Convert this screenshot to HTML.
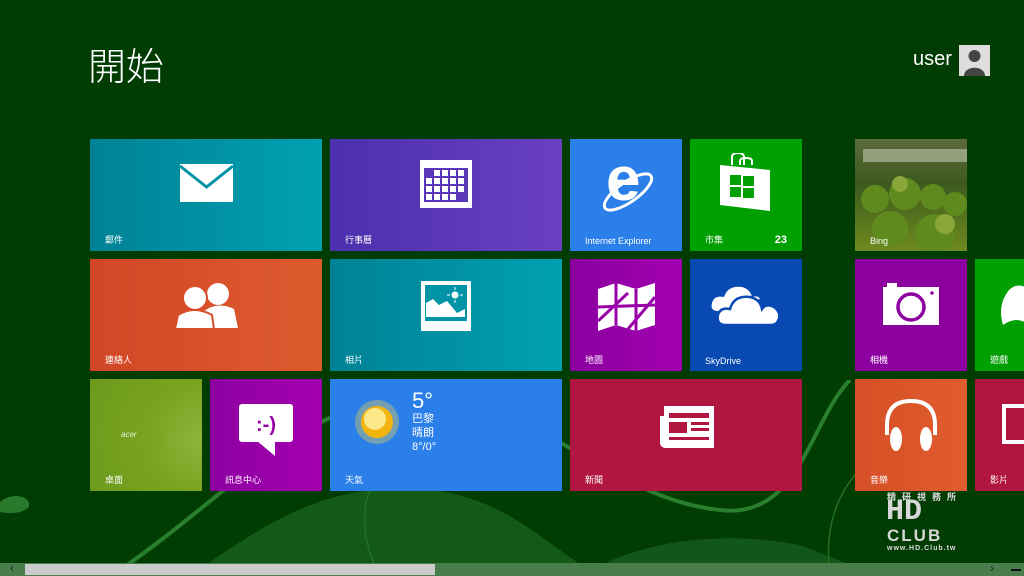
<!DOCTYPE html>
<html><head><meta charset="utf-8"><style>
*{margin:0;padding:0;box-sizing:border-box}
body{width:1024px;height:576px;overflow:hidden;background:#013c02;position:relative;font-family:"Liberation Sans","Noto Sans CJK TC",sans-serif;color:#fff}
.t{position:absolute;width:112px;height:112px}
.w{width:232px}
.l{position:absolute;left:15px;bottom:5px;font-size:9px}
.ic{position:absolute}
</style></head><body>
<svg style="position:absolute;left:0;top:380px" width="1024" height="196">
<path d="M120 190 C250 100 320 0 450 20 C560 40 620 120 720 130 C800 140 810 40 850 0" stroke="#2a7f2f" stroke-width="4" fill="none"/>
<path d="M190 196 C270 140 330 100 430 110 C510 118 550 170 600 196Z" fill="#135a16"/>
<path d="M580 196 C640 160 720 150 800 165 L880 196Z" fill="#12561a"/>
<path d="M0 122 C14 110 34 118 28 128 C18 136 0 132 0 132Z" fill="#2a7a2e"/>
<path d="M380 196 C340 120 380 60 470 40" stroke="#246f28" stroke-width="1.5" fill="none"/>
<path d="M830 196 C820 120 860 80 900 60" stroke="#246f28" stroke-width="1.5" fill="none"/>
</svg>
<div style="position:absolute;left:88px;top:36px;font-size:38px;font-family:'Noto Sans CJK TC',sans-serif;font-weight:300">開始</div>
<div style="position:absolute;left:913px;top:48px;font-size:20px">user</div>
<div style="position:absolute;left:959px;top:45px;width:31px;height:31px;background:#ddd"><svg width="31" height="31"><circle cx="15.5" cy="11" r="6" fill="#444"/><path d="M5 31 C5 20 26 20 26 31Z" fill="#444"/></svg></div>

<div class="t w" style="left:90px;top:139px;background:linear-gradient(90deg,#008195,#00a1b1)"><svg class="ic" style="left:90px;top:24px" width="54" height="40"><rect x="0" y="1" width="53" height="38" fill="#fff"/><path d="M0 3 L26.5 24 L53 3" stroke="#0092a5" stroke-width="3" fill="none"/></svg><span class="l">郵件</span></div>
<div class="t w" style="left:330px;top:139px;background:linear-gradient(90deg,#4c30ad,#6940c0)"><svg class="ic" style="left:90px;top:21px" width="52" height="48"><rect width="52" height="48" fill="#fff"/><rect x="4" y="8" width="44" height="34" fill="#5a36b8"/><g fill="#fff"><rect x="14" y="10" width="6" height="6"/><rect x="22" y="10" width="6" height="6"/><rect x="30" y="10" width="6" height="6"/><rect x="38" y="10" width="6" height="6"/><rect x="6" y="18" width="6" height="6"/><rect x="14" y="18" width="6" height="6"/><rect x="22" y="18" width="6" height="6"/><rect x="30" y="18" width="6" height="6"/><rect x="38" y="18" width="6" height="6"/><rect x="6" y="26" width="6" height="6"/><rect x="14" y="26" width="6" height="6"/><rect x="22" y="26" width="6" height="6"/><rect x="30" y="26" width="6" height="6"/><rect x="38" y="26" width="6" height="6"/><rect x="6" y="34" width="6" height="6"/><rect x="14" y="34" width="6" height="6"/><rect x="22" y="34" width="6" height="6"/><rect x="30" y="34" width="6" height="6"/></g></svg><span class="l">行事曆</span></div>
<div class="t" style="left:570px;top:139px;background:#2a7fe8"><div class="ic" style="left:36px;top:10px;font-size:62px;font-weight:bold;line-height:1">e</div><svg class="ic" style="left:28px;top:28px" width="60" height="50"><ellipse cx="30" cy="25" rx="28" ry="10" transform="rotate(-35 30 25)" stroke="#fff" stroke-width="3" fill="none"/></svg><span class="l">Internet Explorer</span></div>
<div class="t" style="left:690px;top:139px;background:#00a002"><svg class="ic" style="left:30px;top:14px" width="52" height="60"><path d="M12 12 V4 Q12 0 18 0 Q24 0 24 4 V12 M20 12 V8 Q20 5 26 5 Q32 5 32 8 V12" stroke="#fff" stroke-width="2" fill="none"/><path d="M0 12 L50 17 V58 L0 52Z" fill="#fff"/><g fill="#00a002"><rect x="10" y="22" width="11" height="10"/><rect x="23" y="23" width="11" height="10"/><rect x="10" y="34" width="11" height="10"/><rect x="23" y="35" width="11" height="10"/></g></svg><span class="l">市集</span><span style="position:absolute;right:15px;bottom:5px;font-size:11px;font-weight:bold">23</span></div>
<div class="t" style="left:855px;top:139px;background:linear-gradient(180deg,#5b6a3a,#3d5a1e 40%,#6e8a1f);overflow:hidden"><svg width="112" height="112" style="position:absolute;left:0;top:0"><g fill="#5f8a1e"><circle cx="20" cy="60" r="14"/><circle cx="50" cy="55" r="16"/><circle cx="78" cy="58" r="13"/><circle cx="100" cy="65" r="12"/><circle cx="35" cy="90" r="18"/><circle cx="80" cy="95" r="20"/></g><g fill="#8aa63a"><circle cx="45" cy="45" r="8"/><circle cx="90" cy="85" r="10"/></g></svg><div style="position:absolute;left:8px;top:10px;width:150px;height:13px;background:rgba(230,230,220,.45)"></div><span class="l">Bing</span></div>

<div class="t w" style="left:90px;top:259px;background:linear-gradient(90deg,#d24726,#dd5a2e)"><svg class="ic" style="left:84px;top:22px" width="66" height="48"><circle cx="44" cy="13" r="11" fill="#fff"/><path d="M30 30 Q44 20 60 28 L64 47 H30Z" fill="#fff"/><circle cx="21" cy="17" r="12" stroke="#d84e29" stroke-width="2" fill="#fff"/><path d="M1 48 L4 34 Q20 24 38 34 L40 48Z" fill="#fff" stroke="#d84e29" stroke-width="2"/></svg><span class="l">連絡人</span></div>
<div class="t w" style="left:330px;top:259px;background:linear-gradient(90deg,#008195,#00a1b1)"><svg class="ic" style="left:91px;top:22px" width="50" height="50"><rect width="50" height="50" fill="#fff"/><rect x="4" y="4" width="42" height="36" fill="#0094a6"/><path d="M5 36 V22 L12 18 L18 24 L26 20 L36 32 L44 28 V36Z" fill="#fff"/><circle cx="34" cy="14" r="3.5" fill="#fff"/><g stroke="#fff" stroke-width="1"><line x1="34" y1="6" x2="34" y2="9"/><line x1="34" y1="19" x2="34" y2="22"/><line x1="26" y1="14" x2="29" y2="14"/><line x1="39" y1="14" x2="42" y2="14"/></g></svg><span class="l">相片</span></div>
<div class="t" style="left:570px;top:259px;background:linear-gradient(90deg,#8a00a0,#a300b0)"><svg class="ic" style="left:28px;top:24px" width="57" height="48"><path d="M0 6 L18 0 L38 6 L57 0 V42 L38 48 L18 42 L0 48Z" fill="#fff"/><g stroke="#9a00aa" stroke-width="3"><line x1="18" y1="0" x2="18" y2="42"/><line x1="38" y1="6" x2="38" y2="48"/><line x1="0" y1="24" x2="57" y2="22"/><line x1="0" y1="38" x2="30" y2="10"/><line x1="30" y1="46" x2="57" y2="14"/></g></svg><span class="l">地圖</span></div>
<div class="t" style="left:690px;top:259px;background:#094ab2"><svg class="ic" style="left:20px;top:22px" width="72" height="46"><path d="M8 30 Q0 30 2 22 Q4 14 14 16 Q18 4 32 6 Q40 8 42 16 Q48 14 50 18" fill="#fff"/><path d="M16 44 Q6 44 8 34 Q10 26 20 28 Q24 14 40 16 Q50 18 52 28 Q56 22 64 26 Q72 32 68 40 Q66 44 60 44Z" fill="#fff" stroke="#094ab2" stroke-width="2.5"/></svg><span class="l">SkyDrive</span></div>
<div class="t" style="left:855px;top:259px;background:#8c00a0"><svg class="ic" style="left:28px;top:24px" width="57" height="46"><rect x="4" y="0" width="10" height="4" fill="#fff"/><rect y="4" width="56" height="38" fill="#fff"/><circle cx="28" cy="24" r="13" fill="none" stroke="#8c00a0" stroke-width="3.5"/><circle cx="49" cy="10" r="1.8" fill="#8c00a0"/></svg><span class="l">相機</span></div>
<div class="t" style="left:975px;top:259px;background:#00a002"><svg class="ic" style="left:24px;top:26px" width="30" height="40"><path d="M4 40 Q-2 20 10 5 Q20 -4 30 5 V40 Q18 30 4 40Z" fill="#fff"/></svg><span class="l">遊戲</span></div>

<div class="t" style="left:90px;top:379px;background:radial-gradient(circle at 112px 60px,#8cb53a,#78a320 45%,#6d9a1c)"><div style="position:absolute;left:31px;top:51px;font-size:8px;font-style:italic;color:#e6efd5">acer</div><span class="l">桌面</span></div>
<div class="t" style="left:210px;top:379px;background:linear-gradient(90deg,#8d00a1,#a400b0)"><svg class="ic" style="left:29px;top:25px" width="56" height="52"><rect width="54" height="38" rx="3" fill="#fff"/><path d="M18 37 L36 52 V37Z" fill="#fff"/><text x="27" y="27" text-anchor="middle" font-size="20" font-weight="bold" fill="#9a00aa" font-family="Liberation Sans">:-)</text></svg><span class="l">訊息中心</span></div>
<div class="t w" style="left:330px;top:379px;background:#2a7fe8"><svg class="ic" style="left:24px;top:20px" width="46" height="46"><circle cx="23" cy="23" r="22" fill="rgba(255,220,80,.35)"/><circle cx="23" cy="23" r="16" fill="#f4b40e"/><circle cx="21" cy="20" r="11" fill="#fde88a"/></svg><div style="position:absolute;left:82px;top:11px;font-size:22px;line-height:1">5°</div><div style="position:absolute;left:82px;top:33px;font-size:11px;line-height:14px">巴黎<br>晴朗<br>8°/0°</div><span class="l">天氣</span></div>
<div class="t w" style="left:570px;top:379px;background:#b0163f"><svg class="ic" style="left:90px;top:25px" width="54" height="44"><path d="M4 2 H54 V44 H6 Q0 44 0 38 V12 H4Z" fill="#fff"/><g fill="#b0163f"><rect x="9" y="9" width="40" height="5"/><rect x="9" y="18" width="18" height="11"/><rect x="31" y="18" width="18" height="3"/><rect x="31" y="24" width="18" height="3"/><rect x="9" y="33" width="40" height="3"/></g></svg><span class="l">新聞</span></div>
<div class="t" style="left:855px;top:379px;background:linear-gradient(90deg,#d64f27,#e05c2e)"><svg class="ic" style="left:28px;top:18px" width="56" height="56"><path d="M4 38 V28 Q4 4 28 4 Q52 4 52 28 V38" stroke="#fff" stroke-width="4" fill="none"/><ellipse cx="13" cy="42" rx="6" ry="12" fill="#fff"/><ellipse cx="43" cy="42" rx="6" ry="12" fill="#fff"/></svg><span class="l">音樂</span></div>
<div class="t" style="left:975px;top:379px;background:#b0163f"><svg class="ic" style="left:27px;top:25px" width="30" height="42"><rect x="2" y="2" width="40" height="36" stroke="#fff" stroke-width="4" fill="none"/></svg><span class="l">影片</span></div>

<div style="position:absolute;left:887px;top:490px;width:90px;font-size:9px;font-weight:bold;color:#ddd;letter-spacing:6px">精研視務所</div>
<div style="position:absolute;left:886px;top:497px;font-size:30px;font-weight:bold;color:#d8d8d8;font-family:'Liberation Mono',monospace;line-height:1">HD</div>
<div style="position:absolute;left:887px;top:527px;font-size:17px;font-weight:bold;color:#d8d8d8;letter-spacing:2px;line-height:1">CLUB</div>
<div style="position:absolute;left:887px;top:545px;font-size:7px;font-weight:bold;color:#ddd;letter-spacing:1px">www.HD.Club.tw</div>

<div style="position:absolute;left:0;top:563px;width:1024px;height:13px;background:#4a7d4c"></div>
<div style="position:absolute;left:25px;top:564px;width:410px;height:11px;background:#cbcbcb"></div>
<div style="position:absolute;left:10px;top:561px;font-size:12px;color:#222">‹</div>
<div style="position:absolute;left:990px;top:561px;font-size:12px;color:#222">›</div>
<div style="position:absolute;left:1011px;top:569px;width:10px;height:2px;background:#111"></div>
</body></html>
